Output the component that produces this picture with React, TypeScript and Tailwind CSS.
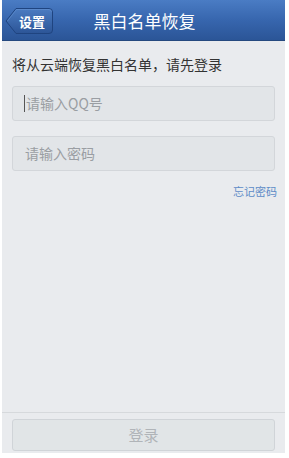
import React from "react";

const font = { fontFamily: '"Noto Sans CJK SC", "Noto Sans", sans-serif' };

export default function App() {
  return (
    <div className="w-[289px] h-[458px] bg-white pl-[2px] pr-[4px] flex flex-col" style={font}>
      <div className="h-[41px] shrink-0 bg-gradient-to-b from-[#4a7cc4] via-[#3766ae] to-[#2b5597] border-b border-[#25497f] flex items-center relative">
        <div className="absolute left-[3px] top-[7px] h-[28px] w-[49px]">
          <svg width="49" height="28" viewBox="0 0 49 28" className="absolute inset-0">
            <defs>
              <linearGradient id="bb" x1="0" y1="0" x2="0" y2="1">
                <stop offset="0" stopColor="#4b7cc2" />
                <stop offset="1" stopColor="#2c5597" />
              </linearGradient>
            </defs>
            <path d="M1 14 L11 1.5 H44 Q47.5 1.5 47.5 5 V23 Q47.5 26.5 44 26.5 H11 Z" fill="url(#bb)" stroke="#1f4480" strokeWidth="1" />
            <path d="M2.5 14 L11.5 2.5 H44 Q46.5 2.5 46.5 5" fill="none" stroke="#6b97d4" strokeWidth="0.8" opacity="0.6" />
          </svg>
          <span className="absolute left-[14px] top-0 h-[28px] flex items-center text-white text-[13px] font-bold leading-none">设置</span>
        </div>
        <div className="flex-1 text-center text-white text-[17px] leading-none pl-[2px]">黑白名单恢复</div>
      </div>
      <div className="flex-1 bg-[#e9ebee] flex flex-col">
        <div className="px-[10px] pt-[14px] text-[14px] leading-[18px] text-[#333333]">将从云端恢复黑白名单，请先登录</div>
        <div className="px-[10px] mt-[13px] flex flex-col gap-[15px]">
          <div className="h-[35px] rounded-[3px] border border-[#d3d6da] bg-[#e2e5e8] flex items-center pl-[11px] text-[14px] text-[#9a9ea3]">
            <span className="w-[1px] h-[17px] bg-[#555] mr-[1px]" />请输入QQ号
          </div>
          <div className="h-[35px] rounded-[3px] border border-[#d3d6da] bg-[#e2e5e8] flex items-center pl-[12px] text-[14px] text-[#9a9ea3]">
            请输入密码
          </div>
        </div>
        <div className="px-[8px] mt-[13px] flex justify-end text-[11px] leading-[14px] text-[#5d8cc7]">忘记密码</div>
        <div className="flex-1" />
        <div className="h-[41px] border-t border-[#d6d9dc] bg-[#e9ebee] px-[10px] pt-[6px]">
          <div className="h-[32px] rounded-[3px] border border-[#d0d4d8] bg-[#e1e5e7] flex items-center justify-center text-[15px] text-[#b0b4b8]">登录</div>
        </div>
        <div className="h-[5px] bg-white" />
      </div>
    </div>
  );
}
